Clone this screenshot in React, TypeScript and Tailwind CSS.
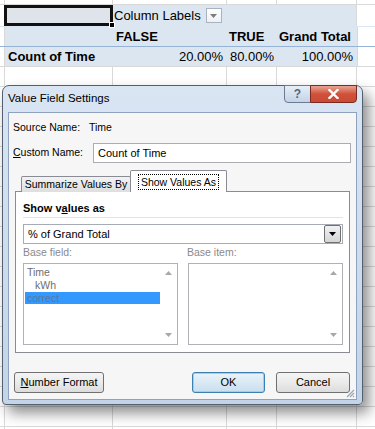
import React from 'react';

const GRID = 'border-[#d9d9d9]';

// blank spreadsheet row with the usual column lines
const BlankRow = ({ h }: { h: string }) => (
  <div className={`flex border-b ${GRID} ${h}`}>
    <div className={`w-[5px] shrink-0 border-r ${GRID}`} />
    <div className={`w-[108px] shrink-0 border-r ${GRID}`} />
    <div className={`w-[114px] shrink-0 border-r ${GRID}`} />
    <div className={`w-[50px] shrink-0 border-r ${GRID}`} />
    <div className={`w-[80px] shrink-0 border-r ${GRID}`} />
    <div className="flex-1" />
  </div>
);

const ScrollArrows = () => (
  <div className="w-[17px] shrink-0 flex flex-col items-center justify-between py-[7px]">
    <svg width="7" height="4" viewBox="0 0 7 4">
      <path d="M0 4 L3.5 0 L7 4 Z" fill="#a8a8a8" />
    </svg>
    <svg width="7" height="4" viewBox="0 0 7 4">
      <path d="M0 0 L3.5 4 L7 0 Z" fill="#a8a8a8" />
    </svg>
  </div>
);

const Sheet = () => (
  <div className="font-['Liberation_Sans',sans-serif] text-[13px] text-black">
    <BlankRow h="h-[5px]" />
    {/* row 1 */}
    <div className={`flex h-[22px] border-b border-[#dce6f1]`}>
      <div className={`w-[5px] shrink-0 border-r ${GRID}`} />
      <div className="w-[109px] -ml-px shrink-0 relative border-[3px] border-[#111] bg-[#dfe4ea]">
        <div className="absolute -right-[5px] -bottom-[5px] w-[6px] h-[6px] bg-black border border-white" />
      </div>
      <div className="w-[243px] shrink-0 bg-[#dce6f1] flex items-center pl-[1px]">
        <span>Column Labels</span>
        <div className="ml-[5px] w-[16px] h-[15px] border border-[#a9b3bf] bg-gradient-to-b from-white to-[#eef1f4] flex items-center justify-center">
          <svg width="7" height="4" viewBox="0 0 7 4">
            <path d="M0 0 L3.5 4 L7 0 Z" fill="#7c7c7c" />
          </svg>
        </div>
      </div>
      <div className={`flex-1 border-l ${GRID}`} />
    </div>
    {/* row 2 */}
    <div className="flex h-[20px] border-b border-[#95b3d7]">
      <div className={`w-[5px] shrink-0 border-r ${GRID}`} />
      <div className="w-[352px] shrink-0 bg-[#dce6f1] flex items-center font-bold">
        <span className="w-[108px]" />
        <span className="w-[114px] pl-[3px]">FALSE</span>
        <span className="w-[50px] pl-[2px]">TRUE</span>
        <span className="w-[80px] pl-[2px]">Grand Total</span>
      </div>
      <div className={`flex-1 border-l ${GRID}`} />
    </div>
    {/* row 3 */}
    <div className={`flex h-[20px] border-b ${GRID}`}>
      <div className={`w-[5px] shrink-0 border-r ${GRID}`} />
      <div className="w-[352px] shrink-0 bg-[#dce6f1] flex items-center">
        <span className="w-[108px] pl-[3px] font-bold">Count of Time</span>
        <span className="w-[114px] pr-[4px] text-right">20.00%</span>
        <span className="w-[50px] pr-[3px] text-right">80.00%</span>
        <span className="w-[80px] pr-[4px] text-right">100.00%</span>
      </div>
      <div className={`flex-1 border-l ${GRID}`} />
    </div>
    {Array.from({ length: 19 }).map((_, i) => (
      <BlankRow key={i} h="h-[20px]" />
    ))}
  </div>
);

const Button = ({ children, focused, className }: { children: React.ReactNode; focused?: boolean; className: string }) => (
  <div
    className={`h-[21px] rounded-[3px] border flex items-center justify-center text-[11px] ${
      focused
        ? 'border-[#3c7fb1] bg-gradient-to-b from-[#eaf3fa] to-[#c9dfee] shadow-[inset_0_0_0_1px_#9fd0f0]'
        : 'border-[#707070] bg-gradient-to-b from-[#f4f4f4] via-[#ebebeb] to-[#dcdcdc]'
    } ${className}`}
  >
    {children}
  </div>
);

const Dialog = () => (
  <div className="absolute left-[2px] top-[85px] w-[361px] h-[320px] rounded-t-[7px] rounded-b-[4px] border border-[#55606f] bg-gradient-to-b from-[#d9e5f3] to-[#c3d4e9] shadow-[6px_8px_14px_rgba(0,0,0,0.45)] font-['Liberation_Sans',sans-serif] text-black">
    {/* title bar */}
    <div className="h-[26px] flex items-center pl-[5px] text-[11.5px]">Value Field Settings</div>
    <div className="absolute top-[-1px] right-[5px] flex">
      <div className="w-[27px] h-[18px] rounded-bl-[4px] border border-[#6c7b90] bg-gradient-to-b from-[#e6eef8] to-[#c3d3e7] flex items-center justify-center text-[12px] font-bold text-[#56657a]">
        ?
      </div>
      <div className="w-[47px] h-[18px] -ml-px rounded-br-[4px] border border-[#7a2a20] bg-gradient-to-b from-[#e8a493] via-[#d0503a] to-[#c94a36] flex items-center justify-center">
        <svg width="11" height="10" viewBox="0 0 11 10">
          <path d="M1.5 1 L9.5 9 M9.5 1 L1.5 9" stroke="#ffffff" strokeWidth="2.4" strokeLinecap="square" />
        </svg>
      </div>
    </div>

    {/* client area */}
    <div className="mx-[5px] h-[288px] border border-[#8ea2bd] bg-[#f6f6f6] relative text-[10.5px]">
      <div className="mt-[8px] h-[14px] flex items-center pl-[4px]">
        <span className="w-[76px]">Source Name:</span>
        <span>Time</span>
      </div>
      <div className="mt-[8px] h-[20px] flex items-center pl-[4px]">
        <span className="w-[80px]">
          <span className="underline">C</span>ustom Name:
        </span>
        <div className="w-[258px] h-[20px] border border-[#abadb3] bg-white flex items-center pl-[4px] text-[11px]">
          Count of Time
        </div>
      </div>

      {/* tabs */}
      <div className="mt-[7px] h-[22px] flex items-end pl-[12px] relative z-10">
        <div className="w-[110px] h-[16px] border border-b-0 border-[#898c95] rounded-t-[2px] bg-gradient-to-b from-[#f3f3f3] to-[#dedede] flex items-center justify-center">
          Summarize Values By
        </div>
        <div className="w-[97px] h-[22px] -ml-px border border-b-0 border-[#898c95] rounded-t-[2px] bg-white flex items-center justify-center">
          <span className="outline outline-1 outline-dotted outline-black px-[2px] leading-[14px]">Show Values As</span>
        </div>
      </div>
      <div className="-mt-px mx-[6px] h-[162px] border border-[#898c95] bg-white pl-[7px] pr-[6px]">
        <div className="mt-[9px] h-[14px] flex items-center font-bold text-[11px]">
          Show v<span className="underline">a</span>lues as
        </div>
        <div className="mt-[2px] border-b border-[#e3e3e3]" />
        <div className="mt-[6px] h-[20px] border border-[#a5acb5] flex items-center justify-between pl-[4px] pr-px text-[11px]">
          <span>% of Grand Total</span>
          <div className="w-[17px] h-[18px] border border-[#707070] rounded-[2px] bg-gradient-to-b from-[#f2f2f2] to-[#d5d5d5] flex items-center justify-center">
            <svg width="7" height="4" viewBox="0 0 7 4">
              <path d="M0 0 L3.5 4 L7 0 Z" fill="#000" />
            </svg>
          </div>
        </div>
        <div className="mt-[2px] h-[14px] flex items-center text-[#8a8a8a]">
          <span className="w-[164px]">Base field:</span>
          <span>Base item:</span>
        </div>
        <div className="mt-[3px] flex justify-between">
          <div className="w-[155px] h-[82px] border border-[#aeb2b8] bg-white flex">
            <div className="flex-1 pt-[2px] pl-[1px] text-[#6e6e6e] leading-[13px]">
              <div className="pl-[2px]">Time</div>
              <div className="pl-[10px]">kWh</div>
              <div className="pl-[2px] h-[12px] bg-[#3399ff] text-[#5878a0] leading-[12px]">correct</div>
            </div>
            <ScrollArrows />
          </div>
          <div className="w-[155px] h-[82px] border border-[#aeb2b8] bg-white flex">
            <div className="flex-1" />
            <ScrollArrows />
          </div>
        </div>
      </div>

      {/* buttons */}
      <div className="mt-[19px] flex pl-[5px] pr-[6px]">
        <Button className="w-[90px]">
          <span>
            <span className="underline">N</span>umber Format
          </span>
        </Button>
        <div className="flex-1" />
        <Button focused className="w-[73px]">OK</Button>
        <Button className="w-[74px] ml-[11px]">Cancel</Button>
      </div>

      <svg className="absolute right-[1px] bottom-[1px]" width="10" height="10" viewBox="0 0 10 10">
        <path d="M9 2 L2 9 M9 5 L5 9 M9 8 L8 9" stroke="#9aa6b6" strokeWidth="1.2" />
      </svg>
    </div>
  </div>
);

export default function App() {
  return (
    <div className="relative w-[375px] h-[429px] overflow-hidden bg-white">
      <Sheet />
      <Dialog />
    </div>
  );
}
